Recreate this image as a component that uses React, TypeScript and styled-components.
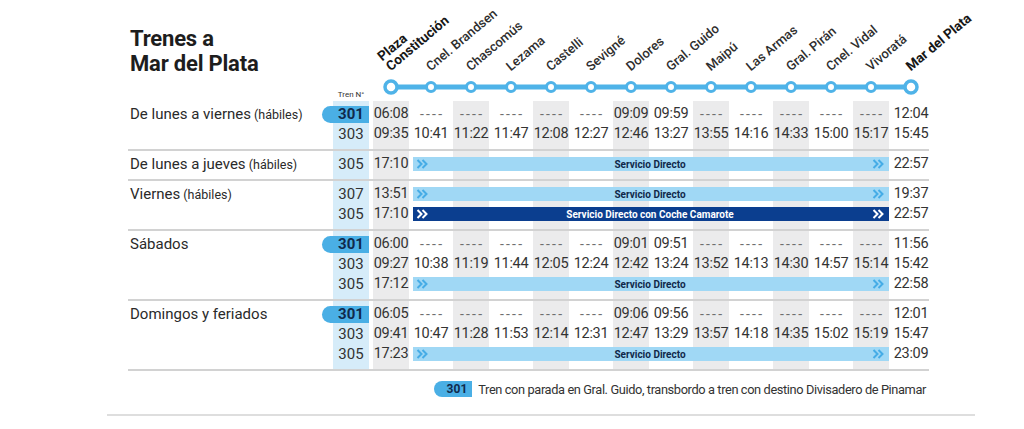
import React from 'react';
import styled, { createGlobalStyle, css } from 'styled-components';

const Global = createGlobalStyle`
  html, body { margin: 0; padding: 0; background: #fff; }
  body { font-family: Roboto, "Noto Sans", "Liberation Sans", sans-serif; color: #2b2b2b; }
`;

const COLS = `201px 36px repeat(14, 36px)`;

const Page = styled.div`
  width: 868px;
  margin-left: 107px;
`;

const Sheet = styled.div`
  margin-left: 21px;
  width: 801px;
`;

const Header = styled.div`
  display: grid;
  grid-template-columns: ${COLS};
  grid-template-rows: 76px 25px;
  column-gap: 4px;
`;

const Title = styled.h1`
  grid-column: 1;
  grid-row: 1 / 3;
  margin: 0;
  padding: 26px 0 0 2px;
  font-size: 22px;
  line-height: 25px;
  font-weight: 700;
  color: #1d1d1d;
  letter-spacing: -0.2px;
`;

const StationCell = styled.div<{ $col: number }>`
  grid-column: ${p => p.$col};
  grid-row: 1;
  display: flex;
  align-items: flex-end;
  padding: 0 0 3px 19px;
`;

const StationName = styled.span<{ $terminal?: boolean }>`
  display: block;
  white-space: nowrap;
  font-size: ${p => (p.$terminal ? '13.5px' : '13px')};
  line-height: 13px;
  font-weight: ${p => (p.$terminal ? 700 : 500)};
  color: ${p => (p.$terminal ? '#161616' : '#2e2e2e')};
  transform-origin: 0 100%;
  transform: rotate(-40deg);
`;

const Route = styled.svg`
  grid-column: 3 / 17;
  grid-row: 2;
  display: block;
`;

const TrenLabel = styled.div`
  grid-column: 2;
  grid-row: 2;
  align-self: end;
  text-align: center;
  font-size: 8px;
  line-height: 10px;
  margin-bottom: 1px;
  color: #333;
`;

const Group = styled.div<{ $lines: number }>`
  display: grid;
  grid-template-columns: ${COLS};
  grid-template-rows: 3px repeat(${p => p.$lines}, 20px) 5px;
  column-gap: 4px;
  border-bottom: 2px solid #d2d2d2;
`;

const Shade = styled.div<{ $col: number; $train?: boolean }>`
  grid-column: ${p => p.$col};
  grid-row: 1 / -1;
  background: ${p => (p.$train ? '#d6ecf9' : '#ebebec')};
`;

const DayLabel = styled.div`
  grid-column: 1;
  grid-row: 2;
  padding-left: 2px;
  font-size: 15px;
  line-height: 20px;
  color: #2a2a2a;
  white-space: nowrap;
`;

const Note = styled.span`
  font-size: 12.5px;
`;

const TrainNo = styled.div<{ $row: number; $hl?: boolean }>`
  grid-column: 2;
  grid-row: ${p => p.$row};
  align-self: center;
  text-align: center;
  font-size: 15px;
  line-height: 17px;
  color: #333;
  ${p =>
    p.$hl &&
    css`
      margin-left: -11px;
      padding-left: 11px;
      background: #4aafe5;
      border-radius: 9px 0 0 9px;
      font-weight: 700;
      color: #102a4c;
    `}
`;

const Time = styled.div<{ $row: number; $col: number; $skip?: boolean }>`
  grid-column: ${p => p.$col};
  grid-row: ${p => p.$row};
  text-align: center;
  font-size: 14.5px;
  line-height: 20px;
  color: #333;
  letter-spacing: -0.3px;
  white-space: nowrap;
  ${p =>
    p.$skip &&
    css`
      font-size: 14px;
      color: #6f6f6f;
      letter-spacing: 2.2px;
      padding-left: 2.2px;
    `}
`;

const Bar = styled.div<{ $row: number; $dark?: boolean }>`
  grid-column: 4 / 16;
  grid-row: ${p => p.$row};
  align-self: center;
  height: 14px;
  display: flex;
  align-items: center;
  padding: 0 5px 0 3px;
  background: ${p => (p.$dark ? '#0b3e8f' : '#a0d8f5')};
  color: ${p => (p.$dark ? '#ffffff' : '#10284a')};
`;

const BarText = styled.span`
  flex: 1;
  text-align: center;
  font-size: 10px;
  font-weight: 700;
  white-space: nowrap;
`;

const ChevronSvg = styled.svg`
  display: block;
  flex: none;
`;

const Legend = styled.div`
  display: flex;
  justify-content: flex-end;
  align-items: center;
  gap: 6px;
  margin-top: 10px;
  padding-right: 3px;
  height: 16px;
`;

const LegendPill = styled.span`
  width: 38px;
  height: 16px;
  box-sizing: border-box;
  padding-right: 5px;
  text-align: right;
  background: #4aafe5;
  border-radius: 8px 0 0 8px;
  font-weight: 700;
  font-size: 12px;
  line-height: 16px;
  color: #102a4c;
`;

const LegendText = styled.span`
  font-size: 12.8px;
  color: #333;
  letter-spacing: -0.38px;
  white-space: nowrap;
`;

const BottomRule = styled.div`
  margin-top: 17px;
  height: 2px;
  background: #dedede;
`;

const stations: string[] = [
  'Plaza|Constitución',
  'Cnel. Brandsen',
  'Chascomús',
  'Lezama',
  'Castelli',
  'Sevigné',
  'Dolores',
  'Gral. Guido',
  'Maipú',
  'Las Armas',
  'Gral. Pirán',
  'Cnel. Vidal',
  'Vivoratá',
  'Mar del Plata',
];

type Line =
  | { no: string; hl?: boolean; times: string[] }
  | { no: string; hl?: boolean; from: string; to: string; bar: string; dark?: boolean };

interface Block {
  label: string;
  note?: string;
  lines: Line[];
}

const D = '----';

const blocks: Block[] = [
  {
    label: 'De lunes a viernes',
    note: '(hábiles)',
    lines: [
      { no: '301', hl: true, times: ['06:08', D, D, D, D, D, '09:09', '09:59', D, D, D, D, D, '12:04'] },
      { no: '303', times: ['09:35', '10:41', '11:22', '11:47', '12:08', '12:27', '12:46', '13:27', '13:55', '14:16', '14:33', '15:00', '15:17', '15:45'] },
    ],
  },
  {
    label: 'De lunes a jueves',
    note: '(hábiles)',
    lines: [{ no: '305', from: '17:10', to: '22:57', bar: 'Servicio Directo' }],
  },
  {
    label: 'Viernes',
    note: '(hábiles)',
    lines: [
      { no: '307', from: '13:51', to: '19:37', bar: 'Servicio Directo' },
      { no: '305', from: '17:10', to: '22:57', bar: 'Servicio Directo con Coche Camarote', dark: true },
    ],
  },
  {
    label: 'Sábados',
    lines: [
      { no: '301', hl: true, times: ['06:00', D, D, D, D, D, '09:01', '09:51', D, D, D, D, D, '11:56'] },
      { no: '303', times: ['09:27', '10:38', '11:19', '11:44', '12:05', '12:24', '12:42', '13:24', '13:52', '14:13', '14:30', '14:57', '15:14', '15:42'] },
      { no: '305', from: '17:12', to: '22:58', bar: 'Servicio Directo' },
    ],
  },
  {
    label: 'Domingos y feriados',
    lines: [
      { no: '301', hl: true, times: ['06:05', D, D, D, D, D, '09:06', '09:56', D, D, D, D, D, '12:01'] },
      { no: '303', times: ['09:41', '10:47', '11:28', '11:53', '12:14', '12:31', '12:47', '13:29', '13:57', '14:18', '14:35', '15:02', '15:19', '15:47'] },
      { no: '305', from: '17:23', to: '23:09', bar: 'Servicio Directo' },
    ],
  },
];

const Chevron: React.FC<{ color: string }> = ({ color }) => (
  <ChevronSvg width="12" height="10" viewBox="0 0 12 10">
    <path d="M1.5 1 L5.5 5 L1.5 9 M6.5 1 L10.5 5 L6.5 9" fill="none" stroke={color} strokeWidth="2" strokeLinejoin="miter" />
  </ChevronSvg>
);

const RouteDiagram: React.FC = () => {
  const blue = '#4fb3e8';
  return (
    <Route width="556" height="22" viewBox="0 0 556 22">
      <line x1="18" y1="11" x2="538" y2="11" stroke={blue} strokeWidth="5" />
      {stations.map((_, i) => {
        const end = i === 0 || i === stations.length - 1;
        return (
          <circle
            key={i}
            cx={18 + i * 40}
            cy={11}
            r={end ? 6 : 4.5}
            fill="#fff"
            stroke={blue}
            strokeWidth={end ? 3.5 : 3}
          />
        );
      })}
    </Route>
  );
};

const GroupView: React.FC<{ block: Block }> = ({ block }) => (
  <Group $lines={block.lines.length}>
    <Shade $col={2} $train />
    {[0, 2, 4, 6, 8, 10, 12].map(c => (
      <Shade key={c} $col={c + 3} />
    ))}
    <DayLabel>
      {block.label}
      {block.note && <Note> {block.note}</Note>}
    </DayLabel>
    {block.lines.map((line, li) => {
      const row = li + 2;
      const cells: React.ReactNode[] = [
        <TrainNo key="no" $row={row} $hl={line.hl}>
          {line.no}
        </TrainNo>,
      ];
      if ('times' in line) {
        line.times.forEach((t, ti) => {
          cells.push(
            <Time key={ti} $row={row} $col={ti + 3} $skip={t === D}>
              {t}
            </Time>
          );
        });
      } else {
        cells.push(
          <Time key="from" $row={row} $col={3}>
            {line.from}
          </Time>,
          <Bar key="bar" $row={row} $dark={line.dark}>
            <Chevron color={line.dark ? '#ffffff' : '#45ace6'} />
            <BarText>{line.bar}</BarText>
            <Chevron color={line.dark ? '#ffffff' : '#45ace6'} />
          </Bar>,
          <Time key="to" $row={row} $col={16}>
            {line.to}
          </Time>
        );
      }
      return <React.Fragment key={li}>{cells}</React.Fragment>;
    })}
  </Group>
);

export default function App() {
  return (
    <>
      <Global />
      <Page>
        <Sheet>
          <Header>
            <Title>
              Trenes a
              <br />
              Mar del Plata
            </Title>
            {stations.map((s, i) => {
              const parts = s.split('|');
              const terminal = i === 0 || i === stations.length - 1;
              return (
                <StationCell key={s} $col={i + 3}>
                  <StationName $terminal={terminal}>
                    {parts.map((p, pi) => (
                      <React.Fragment key={pi}>
                        {pi > 0 && <br />}
                        {p}
                      </React.Fragment>
                    ))}
                  </StationName>
                </StationCell>
              );
            })}
            <TrenLabel>Tren N°</TrenLabel>
            <RouteDiagram />
          </Header>
          {blocks.map(b => (
            <GroupView key={b.label} block={b} />
          ))}
          <Legend>
            <LegendPill>301</LegendPill>
            <LegendText>
              Tren con parada en Gral. Guido, transbordo a tren con destino Divisadero de Pinamar
            </LegendText>
          </Legend>
        </Sheet>
        <BottomRule />
      </Page>
    </>
  );
}
